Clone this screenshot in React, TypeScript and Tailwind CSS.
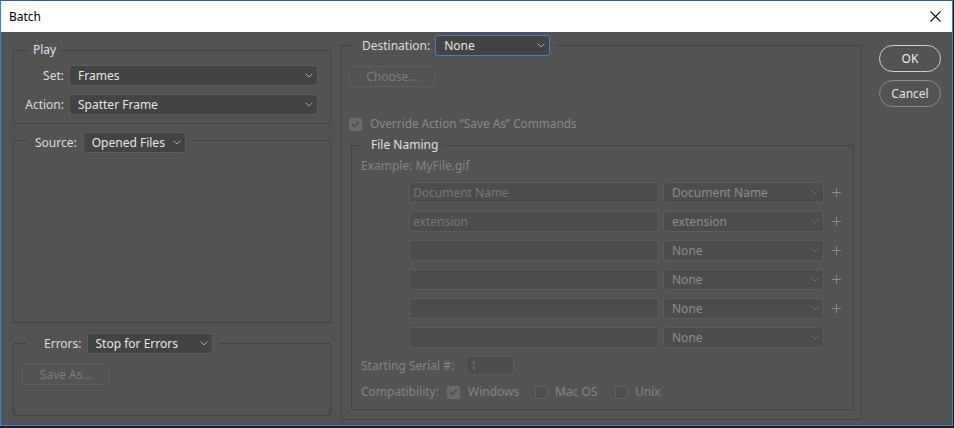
import React from 'react'

const font = { fontFamily: '"Noto Sans", "Liberation Sans", sans-serif' }

const Chevron = ({ dim }: { dim?: boolean }) => (
    <svg width="8" height="5" viewBox="0 0 8 5" className="shrink-0">
        <path d="M0.5 0.5 L4 4 L7.5 0.5" fill="none" stroke={dim ? '#6e6e6e' : '#a8a8a8'} strokeWidth="1" />
    </svg>
)

interface SelectProps {
    value: string
    width: string
    disabled?: boolean
    focus?: boolean
}

const Select = ({ value, width, disabled, focus }: SelectProps) => {
    let tone = 'bg-[#434343] border-[#5c5c5c] text-[#e6e6e6]'
    if (disabled) tone = 'bg-[#4c4c4c] border-[#5b5b5b] text-[#8c8c8c]'
    if (focus) tone = 'bg-[#434343] border-[#3e7fd3] text-[#e6e6e6]'
    return (
        <div className={`${width} ${tone} h-[21px] flex items-center border rounded-[3px] pl-[8px] pr-[4px] shrink-0`}>
            <span className="flex-1 truncate leading-[16px]">{value}</span>
            <Chevron dim={disabled} />
        </div>
    )
}

const Check = ({ checked }: { checked?: boolean }) => (
    <div className={`w-[13px] h-[13px] rounded-[2px] shrink-0 flex items-center justify-center ${checked ? 'bg-[#6a6a6a]' : 'bg-[#4e4e4e] border border-[#626262]'}`}>
        {checked && (
            <svg width="9" height="8" viewBox="0 0 9 8">
                <path d="M1 4 L3.5 6.5 L8 1.5" fill="none" stroke="#4f4f4f" strokeWidth="1.8" />
            </svg>
        )}
    </div>
)

const Plus = () => (
    <svg width="9" height="9" viewBox="0 0 9 9" className="ml-[8px]">
        <path d="M4.5 0 V9 M0 4.5 H9" stroke="#8a8a8a" strokeWidth="1" />
    </svg>
)

const namingRows = [
    { text: 'Document Name', sel: 'Document Name', plus: true },
    { text: 'extension', sel: 'extension', plus: true },
    { text: '', sel: 'None', plus: true },
    { text: '', sel: 'None', plus: true },
    { text: '', sel: 'None', plus: true },
    { text: '', sel: 'None', plus: false },
]

export default function App() {
    return (
        <div className="w-[954px] h-[428px] bg-[#1e1e1e] text-[12px]" style={font}>
            <div className="w-[953px] h-[426px] flex flex-col border border-t-[#2a5f8f] border-[#2b86d0] bg-[#535353]">
                {/* title bar */}
                <div className="h-[31px] bg-white flex items-center justify-between pl-[8px] pr-[11px] shrink-0">
                    <span className="text-black text-[12px]">Batch</span>
                    <svg width="11" height="11" viewBox="0 0 11 11">
                        <path d="M0.5 0.5 L10.5 10.5 M10.5 0.5 L0.5 10.5" stroke="#111" strokeWidth="1.1" />
                    </svg>
                </div>

                <div className="flex items-start pl-[12px] text-[#dcdcdc]">
                    {/* left column */}
                    <div className="w-[318px] flex flex-col pt-[10px]">
                        <fieldset className="border border-[#424242] pb-[8px]">
                            <legend className="ml-[14px] px-[5px] leading-[16px] text-[#e0e0e0]">Play</legend>
                            <div className="flex items-center mt-[7px]">
                                <span className="w-[50px] text-right">Set:</span>
                                <div className="ml-[5px]"><Select value="Frames" width="w-[249px]" /></div>
                            </div>
                            <div className="flex items-center mt-[8px]">
                                <span className="w-[50px] text-right">Action:</span>
                                <div className="ml-[5px]"><Select value="Spatter Frame" width="w-[249px]" /></div>
                            </div>
                        </fieldset>

                        <fieldset className="border border-[#424242] mt-[8px] h-[191px]">
                            <legend className="ml-[13px] pl-[8px] pr-[6px] h-[17px] flex items-start gap-[6px]">
                                <span className="leading-[21px]">Source:</span>
                                <Select value="Opened Files" width="w-[103px]" />
                            </legend>
                        </fieldset>

                        <fieldset className="border border-[#424242] mt-[10px] h-[83px]">
                            <legend className="ml-[13px] pl-[17px] pr-[6px] flex items-center gap-[5px]">
                                <span>Errors:</span>
                                <Select value="Stop for Errors" width="w-[126px]" />
                            </legend>
                            <div className="mt-[10px] ml-[8px] w-[88px] h-[21px] border border-[#5c5c5c] rounded-[2px] bg-[#535353] text-[#7d7d7d] flex items-center justify-center">
                                Save As...
                            </div>
                        </fieldset>
                    </div>

                    {/* right group */}
                    <fieldset className="ml-[10px] mt-[3px] w-[521px] border border-[#424242] pl-[7px] pb-[9px]">
                        <legend className="ml-[4px] pl-[9px] pr-[6px] flex items-center gap-[5px]">
                            <span>Destination:</span>
                            <Select value="None" width="w-[115px]" focus />
                        </legend>
                        <div className="mt-[10px] w-[86px] h-[21px] border border-[#5c5c5c] rounded-[2px] text-[#7d7d7d] flex items-center justify-center">
                            Choose...
                        </div>
                        <div className="mt-[29px] h-[16px] flex items-center gap-[8px] text-[#8a8a8a]">
                            <Check checked />
                            <span className="text-[11.8px]">Override Action “Save As” Commands</span>
                        </div>

                        <fieldset className="mt-[5px] ml-[2px] w-[503px] border border-[#424242] pb-[9px]">
                            <legend className="ml-[7px] pl-[12px] pr-[5px] leading-[16px] text-[#e0e0e0]">File Naming</legend>
                            <div className="mt-[5px] pl-[9px] leading-[16px] text-[#858585]">Example: MyFile.gif</div>
                            <div className="mt-[8px] flex flex-col gap-[8px]">
                                {namingRows.map((r, i) => (
                                    <div key={i} className="flex items-center pl-[57px]">
                                        <div className="w-[250px] h-[21px] bg-[#4c4c4c] border border-[#5b5b5b] rounded-[1px] pl-[3px] flex items-center text-[#777]">
                                            {r.text}
                                        </div>
                                        <div className="ml-[4px]"><Select value={r.sel} width="w-[161px]" disabled /></div>
                                        {r.plus && <Plus />}
                                    </div>
                                ))}
                            </div>
                            <div className="mt-[8px] flex items-center pl-[9px] text-[#858585]">
                                <span className="w-[105px]">Starting Serial #:</span>
                                <div className="w-[48px] h-[19px] bg-[#4c4c4c] border border-[#5b5b5b] pl-[3px] flex items-center text-[#6e6e6e]">1</div>
                            </div>
                            <div className="mt-[9px] h-[16px] flex items-center pl-[9px] text-[#858585]">
                                <span className="w-[86px]">Compatibility:</span>
                                <Check checked />
                                <span className="ml-[8px] w-[67px]">Windows</span>
                                <Check />
                                <span className="ml-[7px] w-[60px]">Mac OS</span>
                                <Check />
                                <span className="ml-[7px]">Unix</span>
                            </div>
                        </fieldset>
                    </fieldset>

                    {/* buttons */}
                    <div className="ml-[17px] mt-[13px] flex flex-col gap-[8px]">
                        <div className="w-[62px] h-[27px] rounded-full border border-[#cfcfcf] flex items-center justify-center text-[#eeeeee]">OK</div>
                        <div className="w-[62px] h-[27px] rounded-full border border-[#8a8a8a] flex items-center justify-center text-[#e2e2e2]">Cancel</div>
                    </div>
                </div>
            </div>
        </div>
    )
}
